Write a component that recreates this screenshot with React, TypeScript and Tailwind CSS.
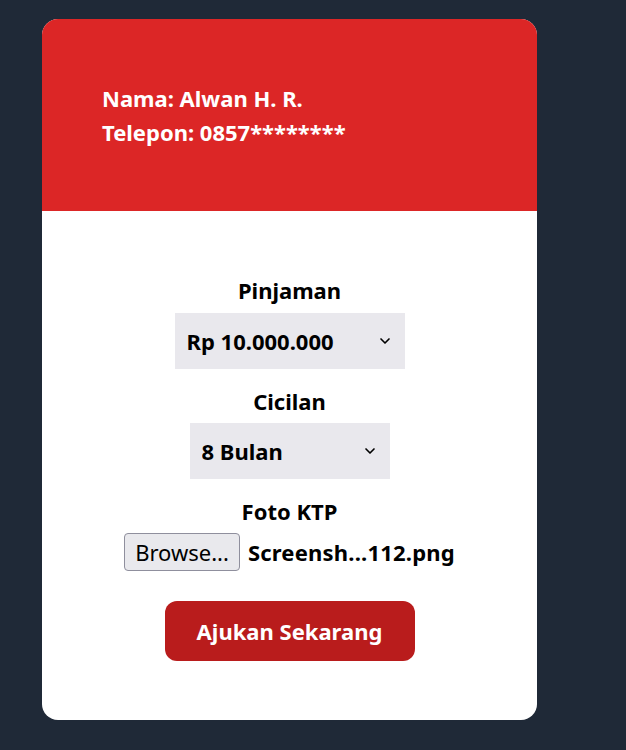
import { ChevronDown } from 'lucide-react';

function SelectBox({ value, options, width }: { value: string; options: string[]; width: string }) {
    return (
        <div className={`relative ${width}`}>
            <select
                defaultValue={value}
                className="w-full h-[56px] appearance-none bg-[#e9e8ed] pl-3 pr-8 text-[22px] font-bold text-black outline-none"
            >
                {options.map((o) => (
                    <option key={o}>{o}</option>
                ))}
            </select>
            <ChevronDown className="pointer-events-none absolute right-[12px] top-1/2 -translate-y-1/2 w-4 h-4 text-black" strokeWidth={2.5} />
        </div>
    );
}

export default function App() {
    return (
        <div className="min-h-[750px] bg-[#1f2937] pt-[19px] pl-[42px] font-['Noto_Sans','Open_Sans',sans-serif]">
            <div className="w-[495px] h-[701px] bg-white rounded-2xl overflow-hidden flex flex-col">
                <div className="bg-[#dc2626] h-[192px] pl-[60px] pt-[65px] text-white text-[22px] font-bold">
                    <p className="leading-7">Nama: Alwan H. R.</p>
                    <p className="leading-7 mt-[6px]">Telepon: 0857********</p>
                </div>

                <form className="flex flex-col items-center pt-[65px] text-black">
                    <label className="text-[22px] font-bold leading-7">Pinjaman</label>
                    <div className="mt-[9px]">
                        <SelectBox value="Rp 10.000.000" options={['Rp 5.000.000', 'Rp 10.000.000', 'Rp 20.000.000']} width="w-[230px]" />
                    </div>

                    <label className="text-[22px] font-bold leading-7 mt-[18px]">Cicilan</label>
                    <div className="mt-[8px]">
                        <SelectBox value="8 Bulan" options={['4 Bulan', '8 Bulan', '12 Bulan']} width="w-[200px]" />
                    </div>

                    <label className="text-[22px] font-bold leading-7 mt-[18px]">Foto KTP</label>
                    <div className="mt-[8px] flex items-center gap-[8px]">
                        <button type="button" className="h-[38px] px-[10px] bg-[#e9e9ed] border border-[#8f8f9d] rounded-[4px] text-[22px] font-normal text-black">
                            Browse...
                        </button>
                        <span className="text-[22px] font-bold tracking-[0.2px]">Screensh...112.png</span>
                    </div>

                    <button type="button" className="mt-[30px] w-[250px] h-[60px] rounded-xl bg-[#b91c1c] text-white text-[22px] font-bold">
                        Ajukan Sekarang
                    </button>
                </form>
            </div>
        </div>
    );
}
